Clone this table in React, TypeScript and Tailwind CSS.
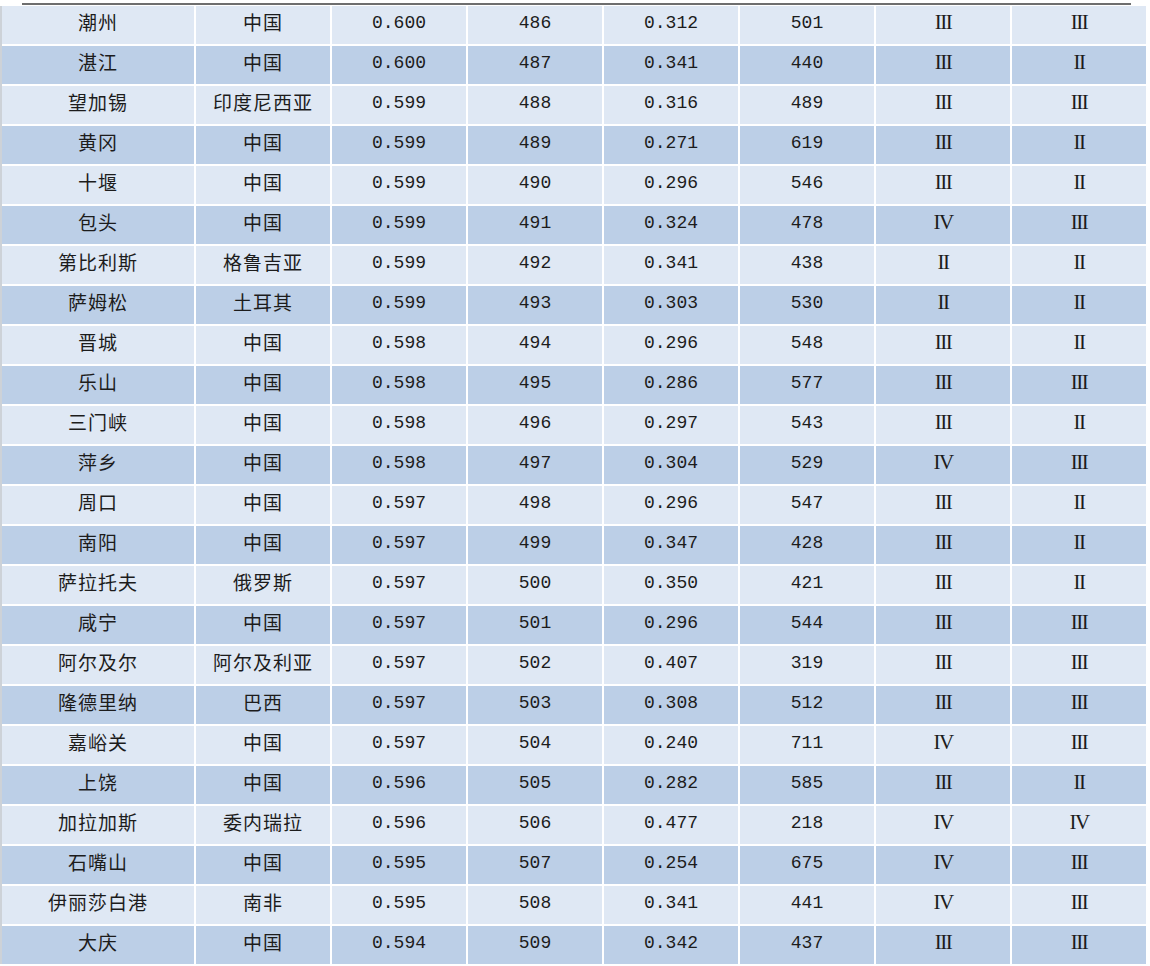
import React from 'react';

type Row = [string, string, string, string, string, string, string, string];

const rows: Row[] = [
  ['潮州', '中国', '0.600', '486', '0.312', '501', 'III', 'III'],
  ['湛江', '中国', '0.600', '487', '0.341', '440', 'III', 'II'],
  ['望加锡', '印度尼西亚', '0.599', '488', '0.316', '489', 'III', 'III'],
  ['黄冈', '中国', '0.599', '489', '0.271', '619', 'III', 'II'],
  ['十堰', '中国', '0.599', '490', '0.296', '546', 'III', 'II'],
  ['包头', '中国', '0.599', '491', '0.324', '478', 'IV', 'III'],
  ['第比利斯', '格鲁吉亚', '0.599', '492', '0.341', '438', 'II', 'II'],
  ['萨姆松', '土耳其', '0.599', '493', '0.303', '530', 'II', 'II'],
  ['晋城', '中国', '0.598', '494', '0.296', '548', 'III', 'II'],
  ['乐山', '中国', '0.598', '495', '0.286', '577', 'III', 'III'],
  ['三门峡', '中国', '0.598', '496', '0.297', '543', 'III', 'II'],
  ['萍乡', '中国', '0.598', '497', '0.304', '529', 'IV', 'III'],
  ['周口', '中国', '0.597', '498', '0.296', '547', 'III', 'II'],
  ['南阳', '中国', '0.597', '499', '0.347', '428', 'III', 'II'],
  ['萨拉托夫', '俄罗斯', '0.597', '500', '0.350', '421', 'III', 'II'],
  ['咸宁', '中国', '0.597', '501', '0.296', '544', 'III', 'III'],
  ['阿尔及尔', '阿尔及利亚', '0.597', '502', '0.407', '319', 'III', 'III'],
  ['隆德里纳', '巴西', '0.597', '503', '0.308', '512', 'III', 'III'],
  ['嘉峪关', '中国', '0.597', '504', '0.240', '711', 'IV', 'III'],
  ['上饶', '中国', '0.596', '505', '0.282', '585', 'III', 'II'],
  ['加拉加斯', '委内瑞拉', '0.596', '506', '0.477', '218', 'IV', 'IV'],
  ['石嘴山', '中国', '0.595', '507', '0.254', '675', 'IV', 'III'],
  ['伊丽莎白港', '南非', '0.595', '508', '0.341', '441', 'IV', 'III'],
  ['大庆', '中国', '0.594', '509', '0.342', '437', 'III', 'III'],
];

const cjk = "font-['Noto_Sans_CJK_SC',sans-serif] text-[19px] tracking-[1px]";
const mono = "font-['Liberation_Mono',monospace] text-[18px] pt-[2px]";
const roman = "font-['Liberation_Serif',serif] text-[21px] tracking-[-1.5px] pt-[1px]";

export default function App() {
  return (
    <div className="w-[1150px] h-[966px] bg-white overflow-hidden text-[#1c1c1c]">
      <div className="ml-[22px] mt-[3px] w-[1109px] h-[2px] bg-[#6e6e6e]" />
      <div className="mt-[1px] border-l-2 border-[#cdd2d8] grid grid-cols-[192px_repeat(7,134px)] gap-x-[2px] gap-y-[2px] w-[1147px]">
        {rows.map((r, i) => {
          const bg = i % 2 === 0 ? 'bg-[#dfe8f4]' : 'bg-[#bccfe7]';
          return r.map((v, j) => {
            const font = j < 2 ? cjk : j < 6 ? mono : roman;
            return (
              <div
                key={`${i}-${j}`}
                className={`h-[38px] flex items-center justify-center pb-[5px] ${bg} ${font}`}
              >
                {v}
              </div>
            );
          });
        })}
      </div>
    </div>
  );
}
